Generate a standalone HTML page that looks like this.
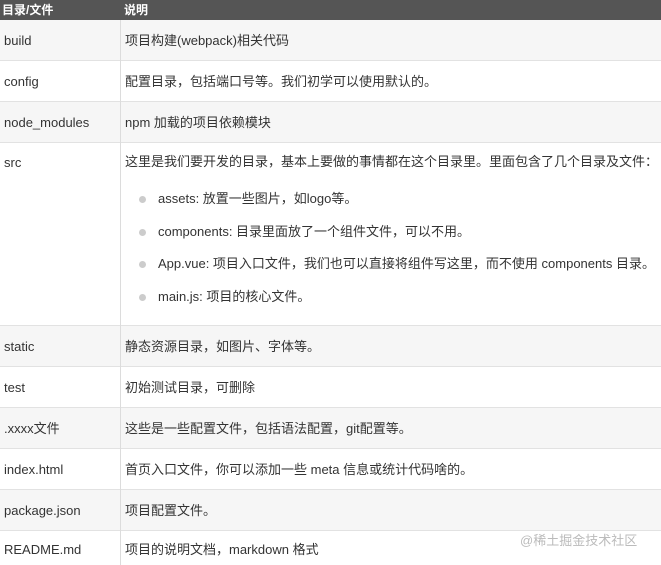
<!DOCTYPE html><html><head><meta charset="utf-8"><style>
body{margin:0;width:661px;height:565px;overflow:hidden;background:#fff;font-family:"Liberation Sans","Noto Sans CJK SC",sans-serif;font-size:13px;color:#333;line-height:16px}
span{line-height:16px;white-space:nowrap}
.r{position:absolute;left:0;width:661px;border-bottom:1px solid #e2e2e2;box-sizing:border-box}
.g{background:#f6f6f6}
.a{position:absolute;left:4px}
.b{position:absolute;left:125px}
.d{position:absolute;left:120px;top:20px;bottom:0;width:1px;background:#dcdcdc}
.h{position:absolute;left:0;top:0;width:661px;height:20px;background:#555;color:#fff;font-weight:bold;font-size:12px}
.li{position:absolute;left:158px}
.dot{position:absolute;left:139px;width:7px;height:7px;border-radius:50%;background:#ccc}
</style></head><body>
<div class="h"><span style="position:absolute;left:2px;top:2px">目录/文件</span><span style="position:absolute;left:124px;top:2px">说明</span></div>
<div class="r g" style="top:20px;height:41px"><span class="a" style="top:13px">build</span><span class="b" style="top:13px">项目构建(webpack)相关代码</span></div>
<div class="r" style="top:61px;height:41px"><span class="a" style="top:13px">config</span><span class="b" style="top:13px">配置目录，包括端口号等。我们初学可以使用默认的。</span></div>
<div class="r g" style="top:102px;height:41px"><span class="a" style="top:13px">node_modules</span><span class="b" style="top:13px">npm 加载的项目依赖模块</span></div>
<div class="r" style="top:143px;height:183px"><span class="a" style="top:12px">src</span><span class="b" style="top:11px">这里是我们要开发的目录，基本上要做的事情都在这个目录里。里面包含了几个目录及文件：</span>
<div class="dot" style="top:53px"></div><span class="li" style="top:48px">assets: 放置一些图片，如logo等。</span>
<div class="dot" style="top:86px"></div><span class="li" style="top:81px">components: 目录里面放了一个组件文件，可以不用。</span>
<div class="dot" style="top:118px"></div><span class="li" style="top:113px">App.vue: 项目入口文件，我们也可以直接将组件写这里，而不使用 components 目录。</span>
<div class="dot" style="top:151px"></div><span class="li" style="top:146px">main.js: 项目的核心文件。</span></div>
<div class="r g" style="top:326px;height:41px"><span class="a" style="top:13px">static</span><span class="b" style="top:13px">静态资源目录，如图片、字体等。</span></div>
<div class="r" style="top:367px;height:41px"><span class="a" style="top:13px">test</span><span class="b" style="top:13px">初始测试目录，可删除</span></div>
<div class="r g" style="top:408px;height:41px"><span class="a" style="top:13px">.xxxx文件</span><span class="b" style="top:13px">这些是一些配置文件，包括语法配置，git配置等。</span></div>
<div class="r" style="top:449px;height:41px"><span class="a" style="top:13px">index.html</span><span class="b" style="top:13px">首页入口文件，你可以添加一些 meta 信息或统计代码啥的。</span></div>
<div class="r g" style="top:490px;height:41px"><span class="a" style="top:13px">package.json</span><span class="b" style="top:13px">项目配置文件。</span></div>
<div class="r" style="top:531px;height:34px;border:0"><span class="a" style="top:11px">README.md</span><span class="b" style="top:11px">项目的说明文档，markdown 格式</span><span style="position:absolute;left:520px;top:2px;color:#bbb;font-size:13px">@稀土掘金技术社区</span></div>
<div class="d"></div>
</body></html>
